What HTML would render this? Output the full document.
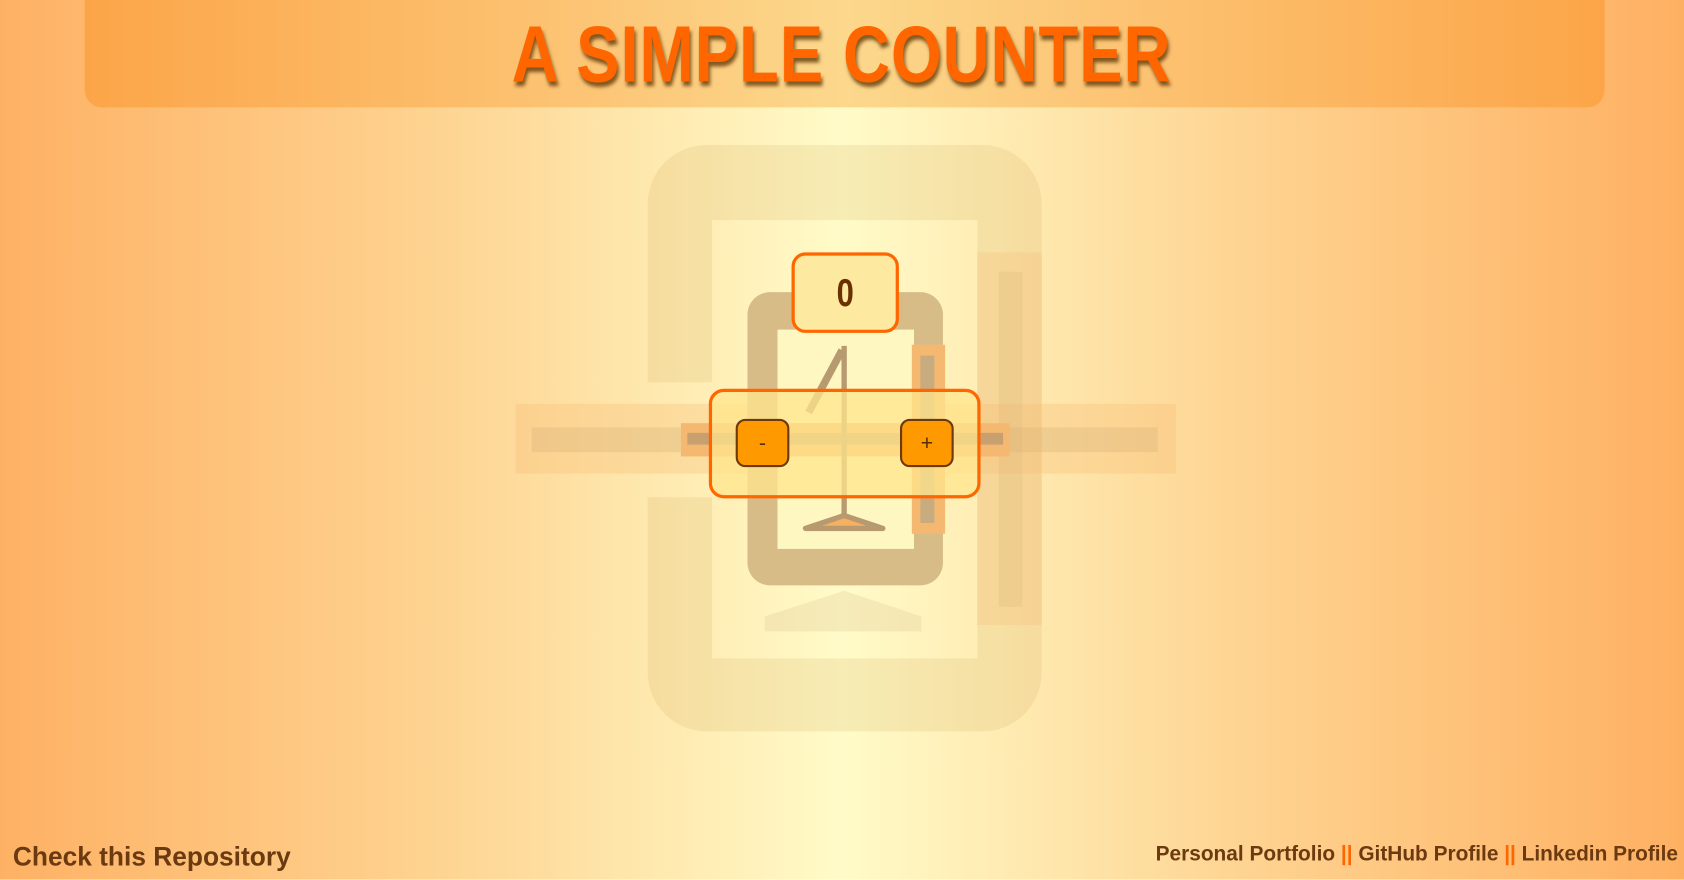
<!DOCTYPE html>
<html><head><meta charset="utf-8"><style>
html,body{margin:0;padding:0;width:1684px;height:880px;overflow:hidden}
#w{position:absolute;left:0;top:0;width:1568px;height:819px;transform:scale(1.07398);transform-origin:0 0;
background:linear-gradient(90deg,#feb164 0%,#fed28f 25%,#fffbc8 50%,#fed28f 75%,#feb062 100%);font-family:"Liberation Sans",sans-serif}
.hdr{position:absolute;left:79px;top:0;width:1415px;height:100px;border-radius:0 0 16px 16px;
background:linear-gradient(90deg,#fca548 0%,#fcc778 35%,#fcd88c 50%,#fcc778 65%,#fca548 100%)}
.title{position:absolute;left:0;width:1568px;top:8px;text-align:center;white-space:nowrap}
.title span{display:inline-block;font-weight:bold;font-size:74px;color:#ff6600;transform:scaleX(0.82);letter-spacing:1px;text-shadow:2px 4px 4px rgba(90,50,0,.75)}
.box{position:absolute;box-sizing:border-box;border:3px solid #ff6600}
.btn{position:absolute;box-sizing:border-box;width:50px;height:45px;top:390px;background:#ff9900;border:2px solid #6b3a10;border-radius:9px;color:#5a2c05;font-size:20px;text-align:center;line-height:42px}
.foot{position:absolute;font-weight:bold;color:#6b3a10;white-space:nowrap}
</style></head><body><div id="w">
<div class="hdr"></div>
<div class="title"><span>A SIMPLE COUNTER</span></div>
<svg width="1568" height="819" style="position:absolute;left:0;top:0">
<g opacity="0.16" fill="#c8a050">
<path d="M658 135H915A55 55 0 0 1 970 190V626A55 55 0 0 1 915 681H658A55 55 0 0 1 603 626V463H663V613H910V205H663V356H603V190A55 55 0 0 1 658 135Z"/>
</g>
<rect x="480" y="376" width="615" height="65" fill="#f7b870" opacity="0.3"/>
<rect x="495" y="398" width="583" height="23" fill="#d0b078" opacity="0.3"/>
<rect x="910" y="235" width="60" height="347" fill="#f7b870" opacity="0.22"/>
<rect x="930" y="253" width="22" height="312" fill="#d0b078" opacity="0.22"/>
<path d="M712 574L786 550L858 574L858 588H712Z" fill="#d8c090" opacity="0.25"/>
<path d="M716 356L738 314" stroke="#d8c090" stroke-width="7" opacity="0.5"/>
<path d="M717 272H857A21 21 0 0 1 878 293V524A21 21 0 0 1 857 545H717A21 21 0 0 1 696 524V293A21 21 0 0 1 717 272ZM724 307V511H851V307Z" fill="#d8bc88" fill-rule="evenodd"/>
<rect x="724" y="307" width="127" height="204" fill="#fff7c2"/>
<rect x="849" y="321" width="31" height="176" fill="#f5b870"/>
<rect x="857" y="331" width="13" height="156" fill="#c8ac80"/>
<rect x="634" y="394" width="306" height="31" fill="#f5b870"/>
<rect x="640" y="403" width="294" height="11" fill="#c8a070"/>
<path d="M786 322V490" stroke="#b89a70" stroke-width="5"/>
<path d="M753 384L784 326" stroke="#b89a70" stroke-width="7"/>
<path d="M750 492L786 480L822 492Z" fill="#f6b060" stroke="#b89a70" stroke-width="5" stroke-linejoin="round"/>
</svg>
<div class="box" style="left:737px;top:235px;width:100px;height:75px;border-radius:13px;background:#fde9a0;text-align:center;font-weight:bold;font-size:36px;line-height:70px;color:#6b3000"><span style="display:inline-block;transform:scaleX(0.8)">0</span></div>
<div class="box" style="left:660px;top:362px;width:253px;height:102px;border-radius:14px;background:rgba(255,230,140,0.75)"></div>
<div class="btn" style="left:685px">-</div>
<div class="btn" style="left:838px">+</div>
<div class="foot" style="left:12px;top:784px;font-size:25px"><span style="display:inline-block;transform:scaleX(0.98);transform-origin:0 0">Check this Repository</span></div>
<div class="foot" style="right:6px;top:784px;font-size:20px"><span style="display:inline-block;transform:scaleX(0.97);transform-origin:100% 0">Personal Portfolio <span style="color:#ff6600">||</span> GitHub Profile <span style="color:#ff6600">||</span> Linkedin Profile</span></div>
</div></body></html>
